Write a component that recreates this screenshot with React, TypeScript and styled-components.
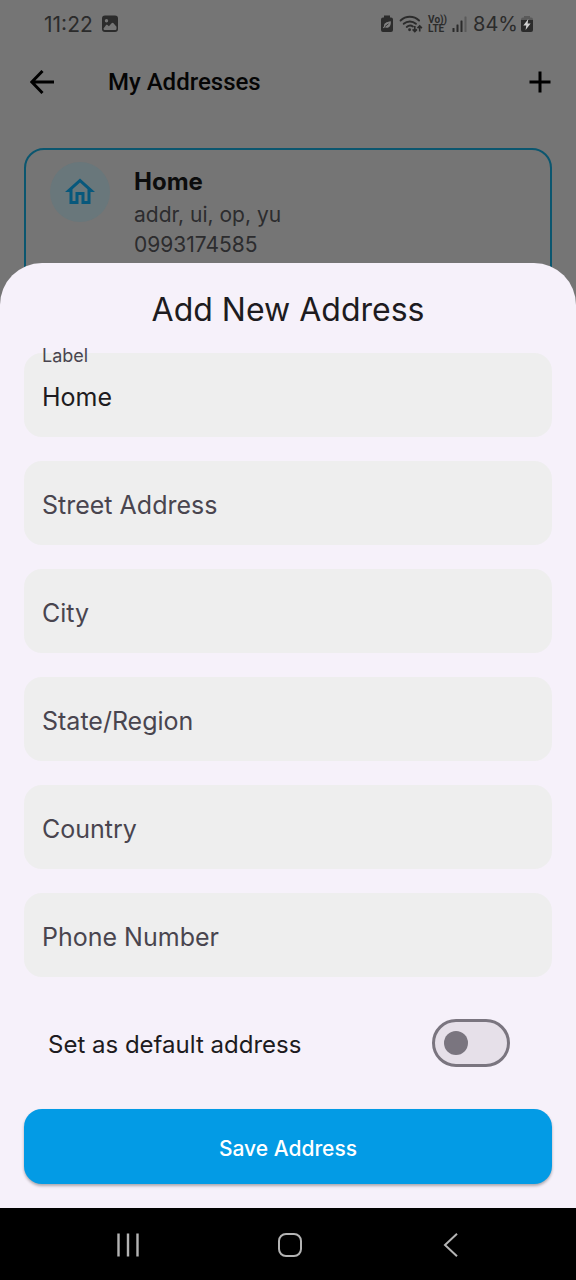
import React, { useState } from 'react';
import styled, { createGlobalStyle, css } from 'styled-components';

const GlobalStyle = createGlobalStyle`
  *, *::before, *::after { box-sizing: border-box; }
  body { margin: 0; background: #000; font-family: Inter, 'Noto Sans', sans-serif; }
  button, input { font: inherit; }
  h1, h2, p { margin: 0; }
  svg { display: block; }
`;

const Shell = styled.div`
  display: flex;
  flex-direction: column;
  min-height: 100vh;
`;

const Stage = styled.div`
  position: relative;
  flex: 1;
  display: flex;
  flex-direction: column;
  justify-content: flex-end;
  padding-top: 64px;
`;

const Behind = styled.div`
  position: absolute;
  inset: 0;
  overflow: hidden;
  background: #757575;
`;

const StatusBar = styled.div`
  display: flex;
  align-items: center;
  justify-content: space-between;
  height: 48px;
  padding: 0 42px 0 44px;
  color: #2b2b2b;
  font-size: 21px;
`;

const StatusGroup = styled.div<{ $gap: number }>`
  display: flex;
  align-items: center;
  gap: ${(p) => p.$gap}px;
`;

const BatteryText = styled.span`
  font-size: 20px;
`;

const AppBar = styled.header`
  display: flex;
  align-items: center;
  height: 68px;
  padding: 0 24px;
`;

const AppTitle = styled.h1`
  flex: 1;
  margin-left: 48px;
  color: #050505;
  font: 500 24px/32px Roboto, sans-serif;
`;

const IconButton = styled.button`
  display: grid;
  place-items: center;
  width: 36px;
  height: 36px;
  padding: 0;
  border: 0;
  background: none;
  color: #000;
  &:last-child { width: 24px; }
`;

const AddressCard = styled.article`
  display: flex;
  gap: 24px;
  margin: 32px 24px;
  padding: 12px 24px 24px;
  border: 2px solid #0b566f;
  border-radius: 20px;
`;

const IconDisc = styled.div`
  display: grid;
  place-items: center;
  flex: none;
  width: 60px;
  height: 60px;
  border-radius: 50%;
  background: #69777b;
`;

const CardText = styled.div`
  padding-top: 5px;
  color: #2c2c2e;
  font-size: 21px;
  line-height: 30px;
`;

const CardTitle = styled.h2`
  margin-bottom: 3px;
  color: #0c0c0c;
  font-size: 24px;
  font-weight: 700;
  line-height: 30px;
`;

const Sheet = styled.section`
  position: relative;
  padding: 24px;
  border-radius: 42px 42px 0 0;
  background: #f6f1fa;
`;

const SheetTitle = styled.h2`
  margin-bottom: 20px;
  color: #1d1b20;
  font-size: 32px;
  font-weight: 400;
  line-height: 46px;
  text-align: center;
`;

const Form = styled.form`
  display: flex;
  flex-direction: column;
  gap: 24px;
`;

const Field = styled.div`
  display: grid;
  height: 84px;
  border-radius: 18px;
  background: #eeeeee;
`;

const FieldInput = styled.input`
  grid-area: 1 / 1;
  width: 100%;
  padding: 4px 18px 0;
  border: 0;
  border-radius: 18px;
  outline: none;
  background: none;
  color: #1d1b20;
  font-size: 25px;
`;

const FieldLabel = styled.label<{ $floating: boolean }>`
  grid-area: 1 / 1;
  align-self: center;
  justify-self: start;
  padding: 4px 18px 0;
  color: #49454f;
  font-size: 25px;
  line-height: 32px;
  pointer-events: none;
  ${(p) =>
    p.$floating &&
    css`
      align-self: start;
      margin-top: -8px;
      padding-top: 0;
      font-size: 18px;
      line-height: 22px;
    `}
`;

const SwitchRow = styled.label`
  display: flex;
  align-items: center;
  justify-content: space-between;
  height: 84px;
  padding: 0 42px 0 24px;
  color: #1d1b20;
  font-size: 24px;
`;

const SwitchText = styled.span`
  padding-top: 2px;
`;

const Switch = styled.input`
  appearance: none;
  display: flex;
  align-items: center;
  width: 78px;
  height: 48px;
  margin: 0;
  padding: 0 9px;
  border: 3px solid #7a757f;
  border-radius: 24px;
  background: #e6e0e9;
  &::before {
    content: '';
    width: 24px;
    height: 24px;
    border-radius: 50%;
    background: #7a757f;
  }
  &:checked { justify-content: flex-end; }
`;

const SaveButton = styled.button`
  height: 75px;
  padding: 3px 24px 0;
  border: 0;
  border-radius: 18px;
  background: #039be5;
  box-shadow: 0 2px 3px rgba(0, 0, 0, 0.3);
  color: #fff;
  font-size: 21px;
  font-weight: 500;
`;

const NavBar = styled.nav`
  display: flex;
  align-items: center;
  justify-content: space-between;
  height: 72px;
  padding: 2px 107px 0 110px;
  background: #000;
  color: #b4b4b4;
`;

const NavButton = styled(IconButton)`
  color: inherit;
  &:last-child { width: 36px; }
`;

const PictureIcon = () => (
  <svg width="18" height="18" viewBox="0 0 18 18" aria-hidden="true">
    <path
      fillRule="evenodd"
      fill="currentColor"
      d="M4 0.500h10a3 3 0 0 1 3 3v10.500a3 3 0 0 1-3 3H4a3 3 0 0 1-3-3V3.500a3 3 0 0 1 3-3zM5.500 4a1.700 1.700 0 1 0 0 3.400 1.700 1.700 0 0 0 0-3.400zM2.500 13.500c0 1 .6 1.600 1.600 1.600h9.800c1 0 1.600-.6 1.600-1.600v-1.800l-3-3.500c-.6-.7-1.300-.7-1.900 0l-2.700 3-1.400-1.100c-.6-.4-1.100-.4-1.600.1z"
    />
  </svg>
);

const BatteryLeafIcon = () => (
  <svg width="14" height="18" viewBox="0 0 14 18" aria-hidden="true">
    <path fill="currentColor" d="M4 0.500h6v2h1a2 2 0 0 1 2 2V15a2 2 0 0 1-2 2H3a2 2 0 0 1-2-2V4.500a2 2 0 0 1 2-2h1z" />
    <path fill="#808080" d="M10.800 6.300c.3 4-1 6.500-4 6.500-1 0-1.500-.2-2-.5l-1.200 1-.7-.8 1.200-1.200C3.600 8.300 6.300 7 10.800 6.300z" />
    <path d="M5 11.500 8.500 8.800" stroke="#2b2b2b" strokeWidth="0.9" fill="none" />
  </svg>
);

const WifiIcon = () => (
  <svg width="24" height="18" viewBox="0 0 25 19" fill="none" stroke="currentColor" aria-hidden="true">
    <path strokeWidth="2" strokeLinecap="round" d="M1.500 5.800C7 .6 15.500.6 21 5.800M4.800 9.300c3.700-3.300 9.200-3.300 12.900 0M8 12.600c1.900-1.600 4.500-1.800 6.500-.5" />
    <circle cx="11" cy="15.600" r="1.500" fill="currentColor" stroke="none" />
    <path strokeWidth="1.700" d="M16.500 11.500v6M14.200 15.200l2.300 2.300 2.300-2.300M21.700 17.500v-6M19.400 13.800l2.300-2.300 2.300 2.300" />
  </svg>
);

const SignalIcon = () => (
  <svg width="16" height="18" viewBox="0 0 16 18" fill="currentColor" aria-hidden="true">
    <rect x="0.500" y="13" width="2" height="4" rx="0.500" />
    <rect x="4.500" y="9.500" width="2" height="7.500" rx="0.500" />
    <rect x="8.500" y="5.500" width="2" height="11.500" rx="0.500" />
    <rect x="12.500" y="1.500" width="2" height="15.500" rx="0.500" opacity="0.35" />
  </svg>
);

const BatteryBoltIcon = () => (
  <svg width="14" height="18" viewBox="0 0 14 18" aria-hidden="true">
    <path fill="#5a5a5a" d="M4 1h6v1.500h1a2 2 0 0 1 2 2V7H1V4.500a2 2 0 0 1 2-2h1z" />
    <path fill="currentColor" d="M1 5h12v10a2 2 0 0 1-2 2H3a2 2 0 0 1-2-2z" />
    <path fill="#d0d0d0" d="M8.300 4 3.300 10.500h3L5.600 15l5-6.500h-3z" />
  </svg>
);

const VolteMark = styled.span`
  display: flex;
  flex-direction: column;
  font: 700 10px/9px Roboto, sans-serif;
`;

const fieldNames = ['Label', 'Street Address', 'City', 'State/Region', 'Country', 'Phone Number'];

export default function App() {
  const [values, setValues] = useState<Record<string, string>>({ Label: 'Home' });

  return (
    <>
      <GlobalStyle />
      <Shell>
        <Stage>
          <Behind>
            <StatusBar>
              <StatusGroup $gap={8}>
                <span>11:22</span>
                <PictureIcon />
              </StatusGroup>
              <StatusGroup $gap={5}>
                <BatteryLeafIcon />
                <WifiIcon />
                <VolteMark>
                  <span>Vo))</span>
                  <span>LTE</span>
                </VolteMark>
                <SignalIcon />
                <StatusGroup $gap={2}>
                  <BatteryText>84%</BatteryText>
                  <BatteryBoltIcon />
                </StatusGroup>
              </StatusGroup>
            </StatusBar>
            <AppBar>
              <IconButton type="button" aria-label="Back">
                <svg width="24" height="24" viewBox="0 0 24 24" fill="none" stroke="currentColor" strokeWidth="3" aria-hidden="true">
                  <path d="M12.500 1 1.800 12l10.700 11M2 12h22" />
                </svg>
              </IconButton>
              <AppTitle>My Addresses</AppTitle>
              <IconButton type="button" aria-label="Add address">
                <svg width="22" height="22" viewBox="0 0 22 22" fill="none" stroke="currentColor" strokeWidth="3" aria-hidden="true">
                  <path d="M11 0.500v21M0.500 11h21" />
                </svg>
              </IconButton>
            </AppBar>
            <AddressCard>
              <IconDisc>
                <svg width="36" height="36" viewBox="0 0 24 24" fill="#07587c" aria-hidden="true">
                  <path d="M12 5.690l5 4.500V18h-2v-6H9v6H7v-7.810l5-4.500M12 3L2 12h3v8h6v-6h2v6h6v-8h3L12 3z" />
                </svg>
              </IconDisc>
              <CardText>
                <CardTitle>Home</CardTitle>
                <p>addr, ui, op, yu</p>
                <p>0993174585</p>
              </CardText>
            </AddressCard>
          </Behind>
          <Sheet role="dialog" aria-labelledby="sheet-title">
            <SheetTitle id="sheet-title">Add New Address</SheetTitle>
            <Form onSubmit={(e) => e.preventDefault()}>
              {fieldNames.map((name) => {
                const id = name.toLowerCase().replace(/\W/g, '-');
                const value = values[name] ?? '';
                return (
                  <Field key={name}>
                    <FieldInput id={id} value={value} onChange={(e) => setValues({ ...values, [name]: e.target.value })} />
                    <FieldLabel htmlFor={id} $floating={value !== ''}>
                      {name}
                    </FieldLabel>
                  </Field>
                );
              })}
              <SwitchRow>
                <SwitchText>Set as default address</SwitchText>
                <Switch type="checkbox" role="switch" />
              </SwitchRow>
              <SaveButton type="submit">Save Address</SaveButton>
            </Form>
          </Sheet>
        </Stage>
        <NavBar>
          <NavButton type="button" aria-label="Recent apps">
            <svg width="24" height="24" viewBox="0 0 24 24" stroke="currentColor" strokeWidth="2.400" aria-hidden="true">
              <path d="M2.500 .5v23M12 .5v23M21.500 .5v23" />
            </svg>
          </NavButton>
          <NavButton type="button" aria-label="Home screen">
            <svg width="24" height="24" viewBox="0 0 24 24" fill="none" stroke="currentColor" strokeWidth="2" aria-hidden="true">
              <rect x="1" y="1" width="22" height="22" rx="7" />
            </svg>
          </NavButton>
          <NavButton type="button" aria-label="Back to previous screen">
            <svg width="24" height="24" viewBox="0 0 24 24" fill="none" stroke="currentColor" strokeWidth="2" aria-hidden="true">
              <path d="M18 .8 6 12l12 11.200" />
            </svg>
          </NavButton>
        </NavBar>
      </Shell>
    </>
  );
}
